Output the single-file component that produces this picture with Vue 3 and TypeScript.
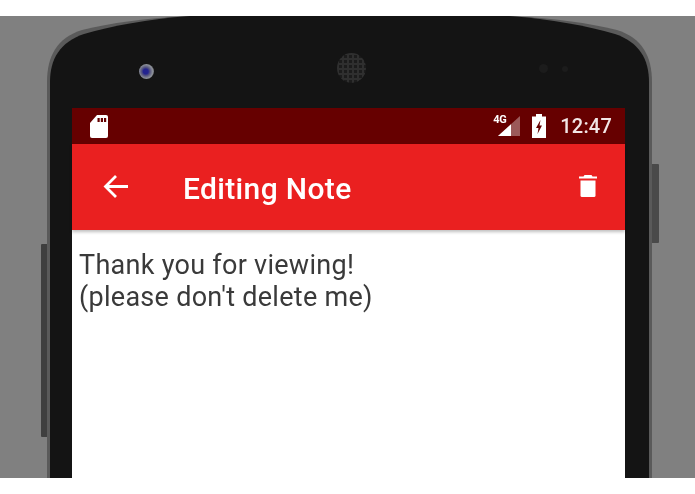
<script setup lang="ts">
const lines: string[] = ['Thank you for viewing!', "(please don't delete me)"]
</script>

<template>
  <div class="page">
    <div class="stage">
      <svg class="shell" width="695" height="462" viewBox="0 0 695 462" aria-hidden="true">
        <rect x="41" y="228" width="8" height="193" rx="1" fill="#3f3f3f" />
        <rect x="650" y="148" width="9" height="79" rx="1" fill="#4a4a4a" />
        <path d="M47 462V66C47 40 57 22 82 14C110 7 145 2 190 0H509C554 2 589 7 617 14C642 22 652 40 652 66V462Z" fill="#5a5a5a" />
        <path d="M50 462V66C50 43 60 26 84 18C112 10 147 3 190 0H509C552 3 587 10 615 18C639 26 649 43 649 66V462Z" fill="#141414" />
      </svg>
      <div class="phone">
        <div class="bezel">
          <div class="camera"></div>
          <div class="speaker"></div>
          <div class="sensors"><i></i><i></i></div>
        </div>
        <div class="screen">
          <div class="statusbar">
            <svg class="sd" width="18" height="23" viewBox="0 0 18 23">
              <path d="M7 0H16A2 2 0 0 1 18 2V21A2 2 0 0 1 16 23H2A2 2 0 0 1 0 21V8Z" fill="#fff" />
              <rect x="7.5" y="3" width="2.2" height="4" fill="#660000" />
              <rect x="10.8" y="3" width="2.2" height="4" fill="#660000" />
              <rect x="14" y="3" width="2.2" height="4" fill="#660000" />
            </svg>
            <div class="status-right">
              <div class="signal">
                <span class="net">4G</span>
                <svg width="22" height="20" viewBox="0 0 22 20">
                  <path d="M22 0V20H0Z" fill="#fff" fill-opacity=".35" />
                  <path d="M13 8.2V20H0Z" fill="#fff" />
                </svg>
              </div>
              <svg class="battery" width="14" height="24" viewBox="0 0 14 24">
                <path d="M4 0H10V2.5H14V24H0V2.5H4Z" fill="#fff" />
                <path d="M8.5 6L4 14H6.5L5.5 20L10 11.5H7.5Z" fill="#660000" />
              </svg>
              <span class="time">12:47</span>
            </div>
          </div>
          <div class="toolbar">
            <svg class="back" width="26" height="25" viewBox="0 0 26 25">
              <path d="M25 12.5H3M13 2L2.5 12.5L13 23" fill="none" stroke="#fff" stroke-width="2.8" />
            </svg>
            <span class="title">Editing Note</span>
            <svg class="trash" width="18" height="22" viewBox="0 0 18 22">
              <path d="M5.5 0H12.5L13.5 1.5H18V3.5H0V1.5H4.5Z" fill="#fff" />
              <path d="M1.5 5.5H16.5V20.5A1.5 1.5 0 0 1 15 22H3A1.5 1.5 0 0 1 1.5 20.5Z" fill="#fff" />
            </svg>
          </div>
          <div class="content">
            <div v-for="line in lines" :key="line">{{ line }}</div>
          </div>
        </div>
      </div>
    </div>
  </div>
</template>

<style>
html, body { margin: 0; background: #fff; }
</style>

<style scoped>
.page { width: 695px; height: 494px; overflow: hidden; background: #fff; padding-top: 16px; box-sizing: border-box; }
.stage { position: relative; width: 695px; height: 462px; background: #808080; overflow: hidden; filter: blur(0.6px); }
.shell { position: absolute; left: 0; top: 0; }
.phone { position: relative; width: 553px; height: 462px; margin-left: 72px; display: flex; flex-direction: column; }
.bezel { position: relative; height: 92px; flex: none; }
.camera { position: absolute; left: 67px; top: 48px; width: 15px; height: 15px; border-radius: 50%; background: radial-gradient(circle at 45% 50%, #23238f 0 22%, #55557f 38%, #8c9098 62%, #3a3a3a 100%); }
.speaker { position: absolute; left: 265px; top: 37px; width: 29px; height: 30px; border-radius: 50%; background-color: #2f2f2f; background-image: radial-gradient(circle, #1c1c1c 0 1.4px, transparent 2px); background-size: 5px 5px; background-position: 1px 1px; }
.sensors { position: absolute; left: 467px; top: 48px; display: flex; gap: 14px; align-items: center; }
.sensors i { display: block; width: 9px; height: 9px; border-radius: 50%; background: #1c1c1c; }
.sensors i + i { width: 6px; height: 6px; }
.screen { flex: 1; display: flex; flex-direction: column; background: #fff; }
.statusbar { height: 36px; flex: none; background: #660000; display: flex; align-items: center; justify-content: space-between; padding: 0 13px 0 18px; }
.status-right { display: flex; align-items: center; }
.signal { position: relative; width: 28px; height: 20px; display: flex; justify-content: flex-end; margin-right: 12px; }
.net { position: absolute; left: 1px; top: -3px; font: 700 11px "Roboto", sans-serif; letter-spacing: -.3px; color: #fff; }
.battery { margin-right: 14px; }
.time { font: 500 20px "Roboto", sans-serif; color: #f2e6e6; letter-spacing: .2px; }
.toolbar { height: 86px; flex: none; background: #ea2020; display: flex; align-items: center; padding: 0 28px 0 31px; box-shadow: 0 2px 3px rgba(0,0,0,.25); position: relative; }
.back { flex: none; margin-top: -2px; }
.title { margin-left: 54px; flex: 1; font: 500 30px "Roboto", sans-serif; letter-spacing: .35px; color: #fff; padding-top: 2px; }
.trash { flex: none; margin-top: -2px; }
.content { padding: 19px 7px 0; font: 400 27px/32px "Roboto", sans-serif; letter-spacing: .28px; color: #3a3a3a; }
</style>
